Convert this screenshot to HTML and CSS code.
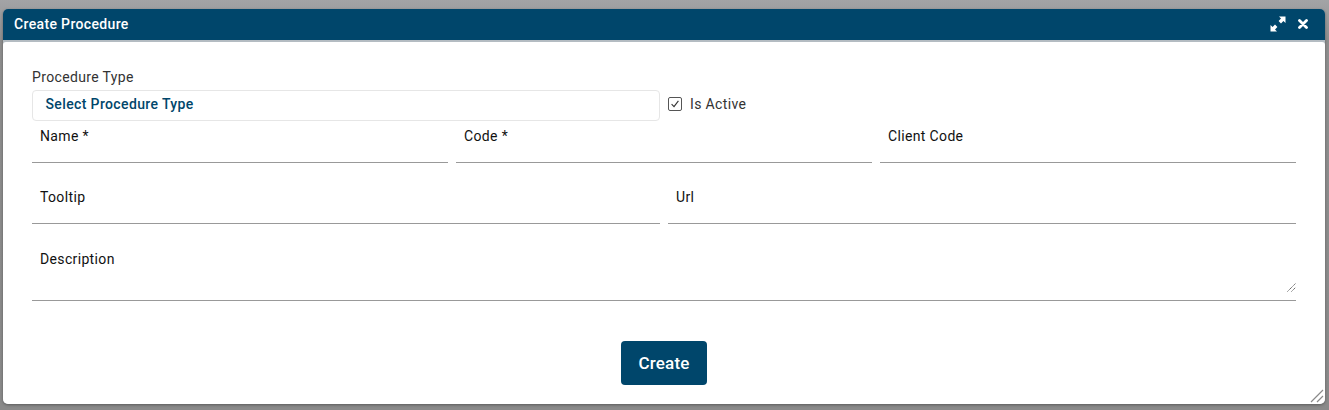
FILE: index.html
```html
<!doctype html>
<html>
<head>
	<meta charset="utf-8">
	<title>Create Procedure</title>
	<link rel="stylesheet" href="styles.css">
</head>
<body>
	<div class="dialog">
		<div class="titlebar">
			<span class="title">Create Procedure</span>
			<div class="title-icons">
				<svg class="icon" width="16" height="16" viewBox="0 0 16 16">
					<path d="M9 .5H15.5V7L13.4 4.9L11 7.4L8.6 5L11 2.6Z M7 15.5H.5V9L2.6 11.1L5 8.6L7.4 11L5 13.4Z" fill="#fff"/>
				</svg>
				<svg class="icon" width="10" height="10" viewBox="0 0 10 10">
					<path d="M1.5 1.5L8.5 8.5M8.5 1.5L1.5 8.5" stroke="#fff" stroke-width="2.8" stroke-linecap="round"/>
				</svg>
			</div>
		</div>
		<div class="body">
			<form class="form">
				<div class="type-row">
					<div class="type-col">
						<label class="type-label">Procedure Type</label>
						<div class="select">Select Procedure Type</div>
					</div>
					<div class="active">
						<span class="checkbox">
							<svg width="12" height="12" viewBox="0 0 12 12">
								<path d="M2.6 6.2L5 8.6L9.4 2.8" fill="none" stroke="#333" stroke-width="1.1"/>
							</svg>
						</span>
						<span>Is Active</span>
					</div>
				</div>
				<div class="row three">
					<div class="field">Name *</div>
					<div class="field">Code *</div>
					<div class="field">Client Code</div>
				</div>
				<div class="row two">
					<div class="field">Tooltip</div>
					<div class="field">Url</div>
				</div>
				<div class="field description">
					Description
					<svg class="grip" width="9" height="9" viewBox="0 0 9 9">
						<path d="M0.5 8.5L8.5 0.5M4.5 8.5L8.5 4.5" stroke="#555" stroke-width="1" stroke-dasharray="1.2 .6"/>
					</svg>
				</div>
				<div class="actions">
					<button type="button" class="create">Create</button>
				</div>
			</form>
			<svg class="resize" width="14" height="14" viewBox="0 0 14 14">
				<path d="M1 13L13 1M7 13L13 7" stroke="#8a8a8a" stroke-width="1.2"/>
			</svg>
		</div>
	</div>
</body>
</html>
```

FILE: styles.css
```css
* {
	box-sizing: border-box;
}
html, body {
	height: 100%;
}
body {
	margin: 0;
	padding: 9px 4px 6px 3px;
	overflow: hidden;
	background: linear-gradient(#a3a4a6, #8e8e8e 10%, #8a8a8a);
	font-family: Roboto, "Liberation Sans", sans-serif;
	font-size: 14px;
	letter-spacing: 0.35px;
	color: #111;
}
.dialog {
	height: 395px;
	background: #b4bcc2;
	border-radius: 5px;
	box-shadow: 0 1px 3px rgba(0, 0, 0, 0.35);
	display: flex;
	flex-direction: column;
}
.titlebar {
	height: 31px;
	flex: none;
	background: #00466b;
	color: #fff;
	border-radius: 5px 5px 0 0;
	padding: 0 17px 2px 11px;
	display: flex;
	align-items: center;
	justify-content: space-between;
}
.title {
	font-size: 14px;
	font-weight: 500;
}
.title-icons {
	display: flex;
	align-items: center;
	gap: 12px;
}
.icon {
	display: block;
}
.body {
	flex: 1;
	position: relative;
	margin-top: 2px;
	padding: 0 29px;
	background: #fff;
	border-radius: 3px 3px 5px 5px;
}
.form {
	padding-top: 27px;
}
.type-row {
	display: grid;
	grid-template-columns: 628px 1fr;
	column-gap: 8px;
	align-items: end;
}
.type-label {
	display: block;
	line-height: 16px;
	height: 21px;
	color: #333;
}
.select {
	height: 31px;
	line-height: 27px;
	padding-left: 12.5px;
	border: 1px solid #e6e6e6;
	border-radius: 4px;
	font-weight: 500;
	letter-spacing: 0.37px;
	color: #00466b;
}
.active {
	height: 31px;
	margin-bottom: 2px;
	display: flex;
	align-items: center;
	gap: 8px;
	color: #333;
}
.checkbox {
	width: 14px;
	height: 14px;
	border: 1px solid #555;
	border-radius: 2px;
	display: flex;
	align-items: center;
	justify-content: center;
}
.row {
	display: grid;
	column-gap: 8px;
}
.three {
	grid-template-columns: repeat(3, 1fr);
}
.two {
	grid-template-columns: repeat(2, 1fr);
}
.field {
	height: 42px;
	padding: 7px 8px 0;
	line-height: 16px;
	border-bottom: 1px solid #999;
}
.two {
	margin-top: 19px;
}
.description {
	position: relative;
	margin-top: 19px;
	height: 58px;
	padding-top: 8px;
}
.grip {
	position: absolute;
	right: 0;
	bottom: 8px;
}
.actions {
	display: flex;
	justify-content: center;
	margin-top: 40px;
}
.create {
	width: 86px;
	height: 44px;
	border: 0;
	border-radius: 4px;
	background: #00466b;
	color: #fff;
	font: 500 17px Roboto, "Liberation Sans", sans-serif;
	letter-spacing: 0.2px;
}
.resize {
	position: absolute;
	right: 1px;
	bottom: 1px;
}
```
